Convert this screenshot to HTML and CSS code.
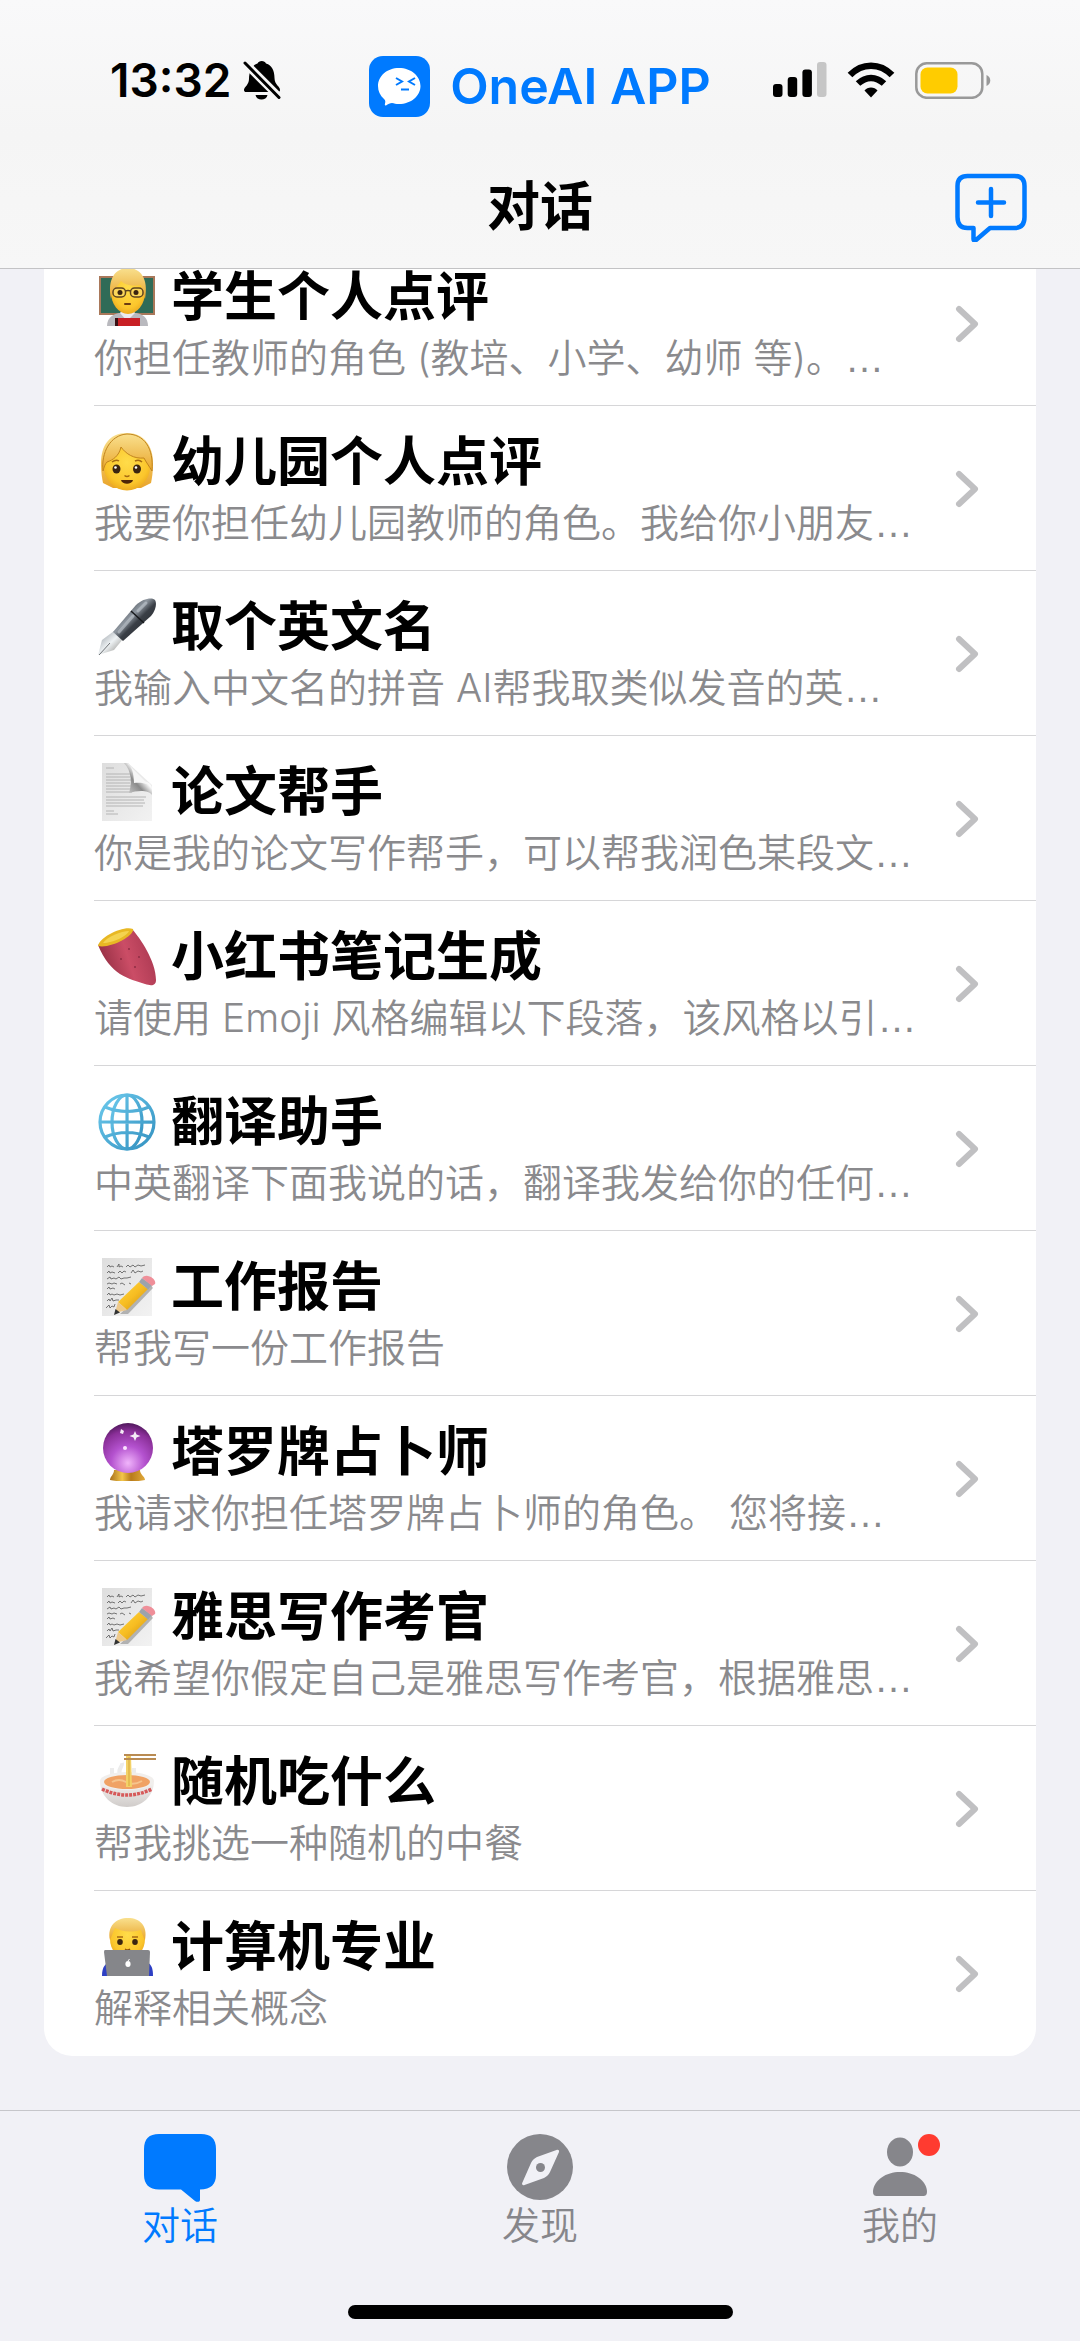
FILE: index.html
```html
<!DOCTYPE html>
<html lang="zh-CN">
<head>
<meta charset="utf-8">
<meta name="viewport" content="width=device-width, initial-scale=1">
<title>对话</title>
<link rel="stylesheet" href="styles.css">
</head>
<body>
<svg class="defs" aria-hidden="true">
  <defs>
    <linearGradient id="hair" x1="0" y1="0" x2="0" y2="1"><stop offset="0" stop-color="#f9e08e"/><stop offset="1" stop-color="#e9a52b"/></linearGradient>
    <radialGradient id="skin" cx=".5" cy=".4" r=".65"><stop offset="0" stop-color="#ffdc4a"/><stop offset=".7" stop-color="#fbc62c"/><stop offset="1" stop-color="#e8a21c"/></radialGradient>
    <linearGradient id="penBody" x1="0" y1="0" x2="1" y2="1"><stop offset=".2" stop-color="#3c4148"/><stop offset=".42" stop-color="#8f97a0"/><stop offset=".55" stop-color="#3a3f46"/><stop offset="1" stop-color="#1d2024"/></linearGradient>
    <linearGradient id="penNib" x1="0" y1="0" x2="1" y2="1"><stop offset="0" stop-color="#8b9299"/><stop offset=".5" stop-color="#eef2f4"/><stop offset="1" stop-color="#7d7a74"/></linearGradient>
    <linearGradient id="paper" x1="0" y1="0" x2="1" y2="1"><stop offset="0" stop-color="#dedede"/><stop offset="1" stop-color="#f2f2f2"/></linearGradient>
    <linearGradient id="fold" x1="1" y1="0" x2="0" y2="1"><stop offset=".4" stop-color="#fafafa"/><stop offset=".6" stop-color="#8a8a8a"/><stop offset="1" stop-color="#d8d8d8"/></linearGradient>
    <linearGradient id="potato" x1="0" y1=".6" x2="1" y2=".3"><stop offset="0" stop-color="#8f2c40"/><stop offset=".5" stop-color="#cb4d66"/><stop offset="1" stop-color="#a83750"/></linearGradient>
    <linearGradient id="globe" x1="0" y1="0" x2="1" y2="1"><stop offset="0" stop-color="#6cc9ec"/><stop offset="1" stop-color="#3391c0"/></linearGradient>
    <linearGradient id="pencil" x1="0" y1="0" x2="1" y2="1"><stop offset="0" stop-color="#ffd83f"/><stop offset=".5" stop-color="#f7bd22"/><stop offset="1" stop-color="#c88a10"/></linearGradient>
    <radialGradient id="orb" cx=".5" cy=".8" r=".85"><stop offset="0" stop-color="#f0b4fb"/><stop offset=".4" stop-color="#b452cf"/><stop offset=".75" stop-color="#8a2f98"/><stop offset="1" stop-color="#3e1149"/></radialGradient>
    <linearGradient id="gold" x1="0" y1="0" x2="1" y2="0"><stop offset="0" stop-color="#a8701a"/><stop offset=".35" stop-color="#f3c64a"/><stop offset=".6" stop-color="#b87b1c"/><stop offset="1" stop-color="#e0a93a"/></linearGradient>
    <linearGradient id="bowl" x1="0" y1="0" x2="0" y2="1"><stop offset="0" stop-color="#f6f4f2"/><stop offset="1" stop-color="#d0ccca"/></linearGradient>
    <symbol id="memo" viewBox="0 0 58 58">
      <path fill="url(#paper)" d="M4 0h50v58H4z"/>
      <path fill="none" stroke="#555" stroke-width=".8" d="M9 9l2-2 1 2 2-1 2 1m3 0l2-3 0 3 2-1 2 1m3 0l2-2 2 2 3-2 2 2 3-2 3 1 4-1M9 15l2-2 1 2 2-1 3 1m3 0l2-2 2 2 2-2 2 1m5 1l2-3 2 3 3-2 3 1 2-1M9 21l3-2 1 2 3-1 2 1 3-2 2 2 3-1 3 0 4-1M9 26l2-1 3 1 2-1 3 1m3 0l2-1 3 2m4-2l2 1M9 31l2-2 1 2 3-1 2 1M9 37l2-2 1 2 2-1 2 1 3-1 3 1 4-1M9 43l2-2 1 2 2-3 1 3 3-1 3 0M8 50l3-3 1 3 2-2 2 1 1-3"/>
      <path fill="#2b2b2b" opacity=".3" d="M22 56l8 0 25-26-2-3z"/>
      <path fill="url(#pencil)" d="M20 44l21-20 9 7-21 21z"/>
      <path fill="#edc98c" d="M20 44l-3 11 12-3z"/>
      <path fill="#333" d="M17.500 51l-1.500 6 6-2.500z"/>
      <path fill="#9da3ab" d="M41 24l3-4 10 7-4 4.500z"/>
      <path fill="#ef8f99" d="M44 20c4-6 15 1 13 6l-3 2z"/>
    </symbol>
  </defs>
</svg>

<header class="top">
  <div class="status">
    <div class="status-left">
      <time>13:32</time>
      <svg width="38" height="40" viewBox="0 0 38 40" aria-label="静音">
        <path fill="#000" d="M1 30c0-3 5-5 5-11 0-7 3-14 8.500-15.500C15.500 0 22 0 23 3.500 29 5 31.500 11 31.500 18c0 7 5.500 8 5.500 12 0 1.500-1 2-2 2H3c-1 0-2-.5-2-2z"/>
        <path fill="#000" d="M12.500 35h12c-1 6-11 6-12 0z"/>
        <path stroke="#f6f6f6" stroke-width="8" d="M1 2l37 37"/>
        <path stroke="#000" stroke-width="3" stroke-linecap="round" d="M2 3l34 34.500"/>
      </svg>
    </div>
    <div class="brand">
      <svg width="61" height="61" viewBox="0 0 61 61" aria-hidden="true">
        <rect width="61" height="61" rx="14" fill="#007aff"/>
        <path fill="#fff" d="M30 12c12 0 21.500 8 21.500 18S42 48 30 48c-3 0-5-.5-7-1-2 0-4 1-6 2.500-1 0-1.500-.5-1-2 .5-2 .5-3-1-4.500C11 39.500 9 35 9 30c0-10 9-18 21-18z"/>
        <path fill="none" stroke="#007aff" stroke-width="2" d="M27 22l6 3.500-6 3.500M46 22l-6 3.500 6 3.500M32 33.500h8"/>
      </svg>
      <span>OneAI APP</span>
    </div>
    <div class="status-right">
      <svg width="54" height="36" viewBox="0 0 54 36" aria-label="信号">
        <rect x="0" y="22" width="9.500" height="13" rx="3"/><rect x="14.700" y="15" width="9.500" height="20" rx="3"/><rect x="29.400" y="7.500" width="9.500" height="27.500" rx="3"/><rect x="44" y="0" width="9.500" height="35" rx="3" fill="#c6c6c6"/>
      </svg>
      <svg width="48" height="36" viewBox="0 0 48 36" aria-label="无线网络">
        <path fill="none" stroke="#000" stroke-width="6.500" d="M3 13c12-12.500 30-12.500 42 0M11 21.500c8-7.500 18-7.500 26 0"/>
        <path d="M17.500 28.500c3-4 10-4 13 0L24 35.500z"/>
      </svg>
      <svg width="76" height="37" viewBox="0 0 76 37" aria-label="电池">
        <rect x="1.300" y="1.300" width="66" height="34.500" rx="10.500" fill="none" stroke="#999" stroke-width="2.500"/>
        <rect x="5.500" y="5.500" width="37" height="26" rx="7" fill="#fc0"/>
        <path fill="#999" d="M71.500 13c5 2 5 9 0 11z"/>
      </svg>
    </div>
  </div>
  <div class="titlebar">
    <h1>对话</h1>
    <button class="add" type="button" aria-label="新建对话">
      <svg width="72" height="70" viewBox="0 0 72 70" aria-hidden="true" fill="none" stroke="#007aff" stroke-width="4.500" stroke-linejoin="round" stroke-linecap="round">
        <path d="M12.500 4h47q10 0 10 10v31q0 11-10 11H35L21 68c-1.500 1.200-2.500.5-2.500-1V56h-6q-10 0-10-11V14q0-10 10-10zM23 30.500h26M36 17v27"/>
      </svg>
    </button>
  </div>
</header>

<main>
  <ul class="list">
    <li><a class="row" href="#">
      <svg class="emoji" viewBox="0 0 58 58" aria-hidden="true"><path fill="#2f6b57" stroke="#a9785a" stroke-width="2" d="M2 9h54v37H2z"/><path fill="#b9b9be" d="M9 58c0-9 7-12 12-13h17c6 1 12 4 12 13z"/><path fill="#ececef" d="M22 45l7 8 8-8-2-3H24z"/><ellipse cx="30" cy="24" rx="17" ry="22" fill="url(#skin)"/><path fill="url(#hair)" d="M13 31C9 10 18 0 30 0s21 10 17 31c-3-6-3-10-4-14-10 2-17-1-20-4-3 5-8 8-10 18z"/><g fill="#fbd65a" stroke="#5e4420" stroke-width="1.500"><rect x="15" y="20" width="12.500" height="9" rx="4"/><rect x="32.500" y="20" width="12.500" height="9" rx="4"/><path d="M27 23q3-1 6 0"/></g><circle cx="22" cy="24.500" r="2.500" fill="#3b2410"/><circle cx="38" cy="24.500" r="2.500" fill="#3b2410"/><path stroke="#6b3b12" stroke-width="2" stroke-linecap="round" d="M27 36h5"/><path fill="#c81f24" d="M19 50h23v8H19z"/><path fill="#3a1014" d="M17 50h3v8h-3z"/></svg>
      <span class="name">学生个人点评</span><span class="desc">你担任教师的角色 (教培、小学、幼师 等)。<span class="more">…</span></span>
      <svg class="chevron" viewBox="0 0 24 38" aria-hidden="true"><path d="M4 4l16 15L4 34"/></svg></a></li>
    <li><a class="row" href="#">
      <svg class="emoji" viewBox="0 0 58 58" aria-hidden="true"><path fill="url(#hair)" d="M29 0C11 0 3 13 3 30c0 9 1 15 2 20l10 5h28l10-5c1-5 2-11 2-20C55 13 46 0 29 0z"/><ellipse cx="29" cy="34" rx="23" ry="23.500" fill="url(#skin)"/><path fill="url(#hair)" stroke="#c2851e" stroke-width="1" d="M5 38C3 20 12 2 29 1c17 0 27 14 25 37-3-5-6-9-8-13-10 1-18-4-23-11-2 9-8 13-14 15-2 2-3 5-4 9z"/><path fill="none" stroke="#a66a12" stroke-width="1.500" d="M14 29q4-3 7-1M37 28q4-2 7 1"/><ellipse cx="18.500" cy="36" rx="4" ry="4.500" fill="#3b2410"/><ellipse cx="39" cy="36" rx="4" ry="4.500" fill="#3b2410"/><circle cx="17.500" cy="34.500" r="1.300" fill="#fff"/><circle cx="38" cy="34.500" r="1.300" fill="#fff"/><path fill="none" stroke="#a66a12" stroke-width="1.500" d="M26.500 42.500q2.500 2 5 0"/><path fill="#4e2608" d="M23 47h12c-1 5-11 5-12 0z"/></svg>
      <span class="name">幼儿园个人点评</span><span class="desc">我要你担任幼儿园教师的角色。我给你小朋友<span class="more">…</span></span>
      <svg class="chevron" viewBox="0 0 24 38" aria-hidden="true"><path d="M4 4l16 15L4 34"/></svg></a></li>
    <li><a class="row" href="#">
      <svg class="emoji" viewBox="0 0 58 58" aria-hidden="true"><path fill="url(#penNib)" d="M0 57l4-15 12-9 9 8-9 11z"/><path stroke="#6c6f73" stroke-width="1" d="M1 57l11-12"/><path fill="url(#penBody)" d="M15 34L38 7C45 0 55-1 57 2s1 10-4 16L25 43z"/><path stroke="#17191c" stroke-width="1.500" d="M33 13l13 12"/><path fill="none" stroke="#c3cad1" stroke-width="3" stroke-linecap="round" opacity=".6" d="M21 34l14-16M40 13l8-8"/></svg>
      <span class="name">取个英文名</span><span class="desc">我输入中文名的拼音 AI帮我取类似发音的英<span class="more">…</span></span>
      <svg class="chevron" viewBox="0 0 24 38" aria-hidden="true"><path d="M4 4l16 15L4 34"/></svg></a></li>
    <li><a class="row" href="#">
      <svg class="emoji" viewBox="0 0 58 58" aria-hidden="true"><path fill="url(#paper)" d="M4 0h26l24 22v36H4z"/><path stroke="#b4b4b4" stroke-width="1" d="M8 5h8M8 11h24M8 14h24M8 17h26M8 20h24M8 23h26M8 26h26M8 29h26M8 34h40M8 37h38M8 40h39M8 43h37M8 48h8M8 51h12"/><path fill="url(#fold)" d="M26 0h4c5 3 6 10 6 18 8-1 18 0 18 8v6c-3-5-14-5-23-2 3-9 3-22-5-30z"/><path fill="#f6f6f6" d="M29 0l25 25c-3-5-12-6-18-5 0-9-2-17-7-20z"/></svg>
      <span class="name">论文帮手</span><span class="desc">你是我的论文写作帮手，可以帮我润色某段文<span class="more">…</span></span>
      <svg class="chevron" viewBox="0 0 24 38" aria-hidden="true"><path d="M4 4l16 15L4 34"/></svg></a></li>
    <li><a class="row" href="#">
      <svg class="emoji" viewBox="0 0 58 58" aria-hidden="true"><path fill="url(#potato)" d="M0 17L34 1c8 9 24 32 24 51 0 6-5 6-11 4C31 51 12 47 0 17z"/><path fill="#e8b824" d="M0 18C1 9 26-3 35 1c2 6-22 20-35 17z"/><path fill="#f4d350" d="M5 15c4-6 18-12 26-12-2 5-16 12-26 12z"/><g fill="#8a2a40"><circle cx="31" cy="21" r=".9"/><circle cx="41" cy="29" r=".9"/><circle cx="37" cy="39" r=".9"/><circle cx="23" cy="31" r=".9"/></g></svg>
      <span class="name">小红书笔记生成</span><span class="desc">请使用 Emoji 风格编辑以下段落，该风格以引<span class="more">…</span></span>
      <svg class="chevron" viewBox="0 0 24 38" aria-hidden="true"><path d="M4 4l16 15L4 34"/></svg></a></li>
    <li><a class="row" href="#">
      <svg class="emoji" viewBox="0 0 58 58" aria-hidden="true"><g fill="none" stroke="url(#globe)" stroke-width="3.200"><circle cx="29" cy="29" r="27"/><ellipse cx="29" cy="29" rx="15" ry="27"/><path d="M29 2l.1 54M2 29l54 .1M7 14q22 9 44 0M7 44q22-9 44 0"/></g></svg>
      <span class="name">翻译助手</span><span class="desc">中英翻译下面我说的话，翻译我发给你的任何<span class="more">…</span></span>
      <svg class="chevron" viewBox="0 0 24 38" aria-hidden="true"><path d="M4 4l16 15L4 34"/></svg></a></li>
    <li><a class="row" href="#">
      <svg class="emoji" aria-hidden="true"><use href="#memo"/></svg>
      <span class="name">工作报告</span><span class="desc">帮我写一份工作报告</span>
      <svg class="chevron" viewBox="0 0 24 38" aria-hidden="true"><path d="M4 4l16 15L4 34"/></svg></a></li>
    <li><a class="row" href="#">
      <svg class="emoji" viewBox="0 0 58 58" aria-hidden="true"><path fill="url(#gold)" d="M16 47h26c0 5 5 6 5 10-8 2-27 2-35 0 0-4 4-5 4-10z"/><circle cx="30" cy="25" r="25" fill="url(#orb)"/><path fill="#fff" d="M37 8l1.500 3.500 4 1.500-4 1.500L37 18l-1.500-3.500-4-1.500 4-1.500zM23 6l3 2-1 3-3-1z" opacity=".9"/><circle cx="27" cy="25" r="2" fill="#fbe3ff"/></svg>
      <span class="name">塔罗牌占卜师</span><span class="desc">我请求你担任塔罗牌占卜师的角色。 您将接<span class="more">…</span></span>
      <svg class="chevron" viewBox="0 0 24 38" aria-hidden="true"><path d="M4 4l16 15L4 34"/></svg></a></li>
    <li><a class="row" href="#">
      <svg class="emoji" aria-hidden="true"><use href="#memo"/></svg>
      <span class="name">雅思写作考官</span><span class="desc">我希望你假定自己是雅思写作考官，根据雅思<span class="more">…</span></span>
      <svg class="chevron" viewBox="0 0 24 38" aria-hidden="true"><path d="M4 4l16 15L4 34"/></svg></a></li>
    <li><a class="row" href="#">
      <svg class="emoji" viewBox="0 0 58 58" aria-hidden="true"><path fill="none" stroke="#ececec" stroke-width="4" d="M14 24v-9M22 22c-3-6 3-8 2-12M36 22v-7"/><path fill="url(#bowl)" d="M2 28c0 15 12 26 27 26s27-11 27-26z"/><ellipse cx="29" cy="28" rx="27" ry="9" fill="#f1efed"/><ellipse cx="29" cy="29" rx="23" ry="7" fill="#f0a264"/><path fill="none" stroke="#f6c58d" stroke-width="2" d="M14 29q7-4 14 0t16-1"/><path fill="#f3d268" d="M28 3h5l1 31h-6z"/><path fill="none" stroke="#d7a738" stroke-width="1" d="M31 4v29"/><path stroke="#b98b52" stroke-width="2" d="M26 2h32M26 6h32"/><path fill="none" stroke="#d65a5a" stroke-width="3.500" stroke-dasharray="3 1" d="M4 36q25 12 50 0"/></svg>
      <span class="name">随机吃什么</span><span class="desc">帮我挑选一种随机的中餐</span>
      <svg class="chevron" viewBox="0 0 24 38" aria-hidden="true"><path d="M4 4l16 15L4 34"/></svg></a></li>
    <li><a class="row" href="#">
      <svg class="emoji" viewBox="0 0 58 58" aria-hidden="true"><path fill="#2d3fc4" d="M4 58c0-9 3-13 10-15h32c7 2 9 6 9 15z"/><ellipse cx="29.500" cy="21" rx="17.500" ry="20" fill="url(#skin)"/><path fill="url(#hair)" d="M12 22C9 8 18 0 30 0s20 8 17 22c-2-3-3-7-4-10-12 3-20 1-26-2-2 4-3 8-5 12z"/><path fill="none" stroke="#a66a12" stroke-width="1.500" d="M19 19h6M34 19h6"/><ellipse cx="22" cy="24" rx="2.800" ry="3" fill="#3b2410"/><ellipse cx="37" cy="24" rx="2.800" ry="3" fill="#3b2410"/><path fill="none" stroke="#8a5010" stroke-width="1.500" d="M27 31q3 2 5 0"/><path fill="#85868a" d="M7 32h43q2 0 2 2l-1 24H9L6 34q0-2 1-2z"/><ellipse cx="30" cy="46" rx="2.600" ry="3" fill="#fff"/><path stroke="#fff" stroke-width="1" d="M30 43l1.500-2"/></svg>
      <span class="name">计算机专业</span><span class="desc">解释相关概念</span>
      <svg class="chevron" viewBox="0 0 24 38" aria-hidden="true"><path d="M4 4l16 15L4 34"/></svg></a></li>
  </ul>
</main>

<footer class="bottom">
  <nav class="tabs">
    <a class="tab active" href="#" aria-current="page">
      <svg width="72" height="68" viewBox="0 0 72 68" aria-hidden="true"><path fill="currentColor" d="M15 0h42c10 0 15 5 15 15v26c0 9-5 14.500-16 14.500V66c0 2-3 2.500-5 1L37 55.500H15C5 55.500 0 50 0 41V15C0 5 5 0 15 0z"/></svg>
      <span>对话</span></a>
    <a class="tab" href="#">
      <svg width="68" height="68" viewBox="0 0 68 68" aria-hidden="true"><circle cx="34" cy="33" r="33" fill="currentColor"/><path fill="#f1f1f6" d="M50.500 16c1.500-.7 3 .3 2.500 2l-9 20c-1.500 3-3 4.500-6 6L18.500 51c-1.500.8-3-.5-2.300-2L25 29c1.500-3 3-4.500 6-6z"/><circle cx="34.500" cy="33.500" r="4.500" fill="currentColor"/></svg>
      <span>发现</span></a>
    <a class="tab" href="#">
      <svg width="80" height="68" viewBox="0 0 80 68" aria-hidden="true"><ellipse cx="40" cy="18" rx="13" ry="14.500" fill="currentColor"/><path fill="currentColor" d="M13 57c1-11 13-19 27-19s26 8 27 19c0 4-1 5-4.500 5h-45c-3.500 0-4.500-1-4.500-5z"/><circle cx="69" cy="11" r="11" fill="#ff3b30"/></svg>
      <span>我的</span></a>
  </nav>
  <div class="home"></div>
</footer>
</body>
</html>
```
FILE: styles.css
```css
* {
  box-sizing: border-box;
}

body {
  display: flex;
  flex-direction: column;
  min-height: 100vh;
  margin: 0;
  background: #f1f1f6;
  color: #000;
  font-family: Inter, "Noto Sans CJK SC", sans-serif;
}

a {
  color: inherit;
  text-decoration: none;
}

svg {
  display: block;
  flex: none;
}

.defs {
  position: absolute;
  width: 0;
  height: 0;
}

/* Header */

.top {
  position: sticky;
  top: 0;
  z-index: 1;
  background: linear-gradient(#f9f9fa, #f5f5f5 50%, #f7f7f7);
  border-bottom: 1px solid #c3c3c5;
}

.status {
  display: grid;
  grid-template-columns: 1fr auto 1fr;
  align-items: center;
  height: 122px;
  padding-top: 50px;
}

.status-left,
.status-right,
.brand {
  display: flex;
  align-items: center;
}

.status-left {
  gap: 12px;
  padding: 0 0 12px 110px;
  font-size: 46px;
  font-weight: 600;
  line-height: 48px;
}

.status-right {
  justify-content: flex-end;
  gap: 20px;
  padding: 0 89px 12px 0;
}

.brand {
  gap: 20px;
  color: #007aff;
  font-size: 50px;
  font-weight: 600;
  line-height: 60px;
}

.titlebar {
  display: grid;
  grid-template-columns: 1fr auto 1fr;
  align-items: center;
  height: 146px;
  padding: 24px 53px 0;
}

h1 {
  grid-column: 2;
  margin: 0;
  font-size: 53px;
  font-weight: 700;
  line-height: 60px;
}

.add {
  justify-self: end;
  padding: 0;
  border: 0;
  background: none;
}

/* Prompt list, scrolled a little under the header */

.list {
  margin: -28px 44px 54px;
  padding: 0;
  border-radius: 28px;
  background: #fff;
  list-style: none;
  overflow: hidden;
}

.row {
  display: grid;
  grid-template-columns: 58px 1fr 24px;
  grid-template-rows: 60px 54px;
  column-gap: 15px;
  row-gap: 4px;
  height: 165px;
  margin-left: 50px;
  padding: 26px 57px 0 4px;
  border-bottom: 1px solid #d6d6d8;
}

li:last-child .row {
  border-bottom: 0;
}

.emoji {
  width: 58px;
  height: 58px;
  align-self: center;
}

.name {
  font-size: 53px;
  font-weight: 700;
  line-height: 60px;
  white-space: nowrap;
}

.desc {
  grid-area: 2 / 1 / 3 / 3;
  margin-left: -4px;
  color: #8a8a8d;
  font-size: 39px;
  font-weight: 350;
  line-height: 54px;
  white-space: nowrap;
}

.more {
  font-family: "Liberation Sans", sans-serif;
}

.chevron {
  grid-area: 1 / 3 / 3 / 4;
  align-self: center;
  width: 24px;
  height: 38px;
  margin-bottom: 4px;
  fill: none;
  stroke: #c0c0c2;
  stroke-width: 6;
  stroke-linecap: round;
  stroke-linejoin: round;
}

/* Tab bar */

.bottom {
  margin-top: auto;
  padding-bottom: 22px;
  border-top: 1px solid #c6c6ca;
}

.tabs {
  display: grid;
  grid-template-columns: repeat(3, 1fr);
}

.tab {
  display: flex;
  flex-direction: column;
  align-items: center;
  padding-top: 23px;
  color: #86868b;
  font-size: 38px;
  font-weight: 350;
  line-height: 46px;
}

.tab.active {
  color: #007aff;
}

.home {
  width: 385px;
  height: 14px;
  margin: 57px auto 0;
  border-radius: 7px;
  background: #000;
}
```
